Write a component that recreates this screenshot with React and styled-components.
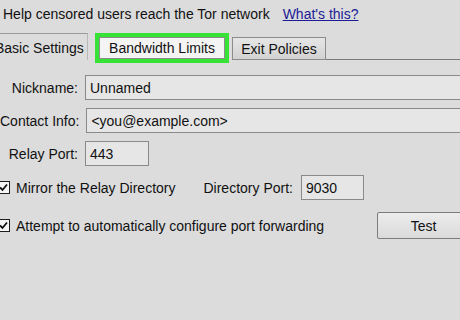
import React from "react";
import styled, { createGlobalStyle } from "styled-components";

const GlobalStyle = createGlobalStyle`
  html, body {
    margin: 0;
    padding: 0;
    width: 460px;
    height: 320px;
    overflow: hidden;
    background: #dcdcdc;
  }

  body {
    font-family: "Liberation Sans", Arial, sans-serif;
    font-size: 14px;
    color: #111;
  }
`;

const Page = styled.div`
  width: 460px;
  height: 320px;
  display: flex;
  flex-direction: column;
`;

const Header = styled.div`
  height: 33px;
  box-sizing: border-box;
  padding: 6px 0 0 3px;
  display: flex;
  gap: 13px;
  line-height: 17px;
  white-space: nowrap;
`;

const HelpLink = styled.a`
  color: #1c1c96;
  text-decoration: underline;
`;

const TabStrip = styled.div`
  height: 27px;
  display: flex;
  align-items: flex-end;
`;

const ActiveTab = styled.div`
  width: 99px;
  height: 27px;
  margin-left: -11px;
  box-sizing: border-box;
  border-top: 1px solid #9a9a9a;
  border-right: 1px solid #b8b8b8;
  padding-left: 6px;
  padding-top: 1px;
  display: flex;
  align-items: center;
  white-space: nowrap;
`;

const Tab = styled.div`
  width: ${(p) => p.$width}px;
  height: ${(p) => (p.$focus ? 22 : 23)}px;
  margin-left: ${(p) => p.$gap}px;
  margin-bottom: ${(p) => (p.$focus ? 1 : 0)}px;
  box-sizing: border-box;
  border: 1px solid #8c8c8c;
  background: ${(p) =>
    p.$focus ? "#f4f4f4" : "linear-gradient(#e6e6e6, #d2d2d2)"};
  outline: ${(p) => (p.$focus ? "4px solid #36e236" : "none")};
  display: flex;
  align-items: center;
  justify-content: center;
  white-space: nowrap;
`;

const TabFill = styled.div`
  flex: 1;
  height: 1px;
  background: #7a7a7a;
`;

const Form = styled.div`
  padding-top: 15px;
  display: flex;
  flex-direction: column;
  gap: 8px;
`;

const FieldRow = styled.div`
  display: flex;
  align-items: center;
  gap: 7px;
`;

const Label = styled.div`
  flex: 0 0 78px;
  display: flex;
  justify-content: flex-end;
  white-space: nowrap;
`;

const TextBox = styled.div`
  height: 25px;
  box-sizing: border-box;
  border: 1px solid #8a8a8a;
  background: #e6e6e6;
  padding-left: 4px;
  display: flex;
  align-items: center;
  white-space: nowrap;
  width: ${(p) => (p.$width ? `${p.$width}px` : "auto")};
  flex: ${(p) => (p.$width ? "0 0 auto" : "1")};
  margin-right: ${(p) => (p.$width ? 0 : -10)}px;
`;

const CheckRow = styled.div`
  display: flex;
  align-items: center;
  margin-left: -3px;
  margin-top: ${(p) => p.$top}px;
  white-space: nowrap;
`;

const Box = styled.span`
  width: 13px;
  height: 13px;
  box-sizing: border-box;
  border: 1px solid #1e1e1e;
  background: #f6f6f6;
  display: flex;
  align-items: center;
  justify-content: center;
  margin-right: 6px;
`;

const PortLabel = styled.span`
  margin-left: 28px;
  margin-right: 8px;
`;

const Button = styled.div`
  margin-left: auto;
  margin-right: -12px;
  width: 95px;
  height: 27px;
  box-sizing: border-box;
  border: 1px solid #7c7c7c;
  border-radius: 2px;
  background: linear-gradient(#ececec, #dadada);
  display: flex;
  align-items: center;
  justify-content: center;
  padding-right: 2px;
`;

const Checkbox = () => (
  <Box>
    <svg width="9" height="9" viewBox="0 0 9 9">
      <path d="M1 4.5 L3.5 7 L8 1.5" fill="none" stroke="#111" strokeWidth="1.8" />
    </svg>
  </Box>
);

export default function App() {
  return (
    <Page>
      <GlobalStyle />
      <Header>
        <span>Help censored users reach the Tor network</span>
        <HelpLink>What's this?</HelpLink>
      </Header>

      <TabStrip>
        <ActiveTab>Basic Settings</ActiveTab>
        <Tab $width={126} $gap={11} $focus>
          Bandwidth Limits
        </Tab>
        <Tab $width={94} $gap={7}>
          Exit Policies
        </Tab>
        <TabFill />
      </TabStrip>

      <Form>
        <FieldRow>
          <Label>Nickname:</Label>
          <TextBox>Unnamed</TextBox>
        </FieldRow>
        <FieldRow>
          <Label>Contact Info:</Label>
          <TextBox>&lt;you@example.com&gt;</TextBox>
        </FieldRow>
        <FieldRow>
          <Label>Relay Port:</Label>
          <TextBox $width={64}>443</TextBox>
        </FieldRow>

        <CheckRow $top={1}>
          <Checkbox />
          <span>Mirror the Relay Directory</span>
          <PortLabel>Directory Port:</PortLabel>
          <TextBox $width={63}>9030</TextBox>
        </CheckRow>

        <CheckRow $top={4}>
          <Checkbox />
          <span>Attempt to automatically configure port forwarding</span>
          <Button>Test</Button>
        </CheckRow>
      </Form>
    </Page>
  );
}
